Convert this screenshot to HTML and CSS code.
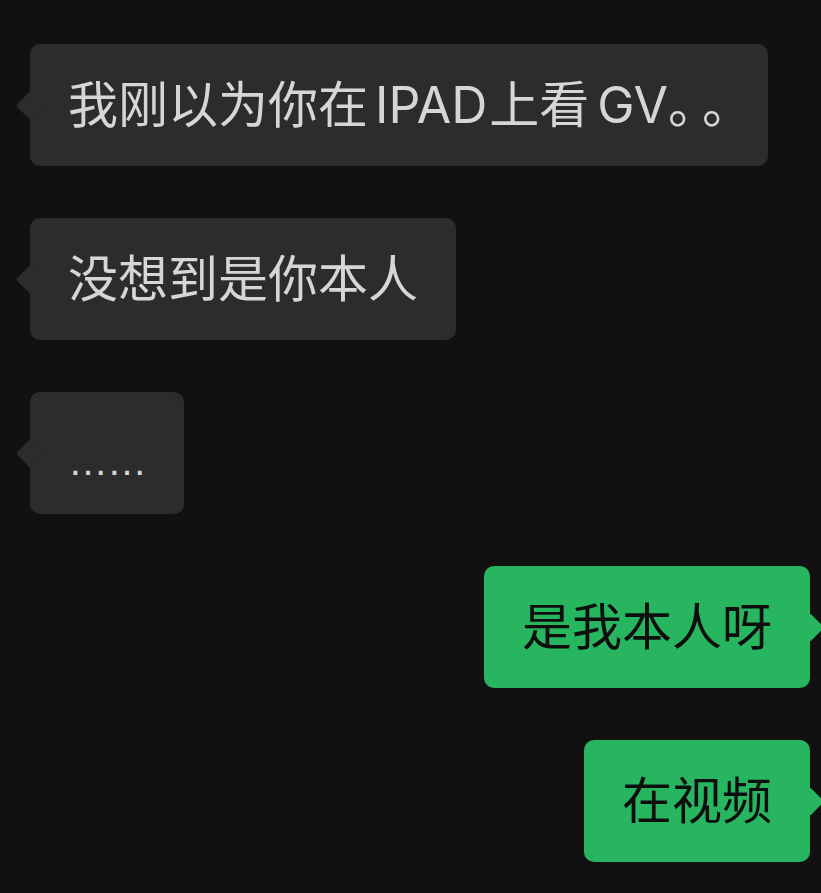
FILE: index.html
```html
<!DOCTYPE html>
<html lang="zh-CN">
<head>
  <meta charset="UTF-8" />
  <meta name="viewport" content="width=device-width, initial-scale=1.0"/>
  <title>聊天记录</title>
  <link rel="stylesheet" href="styles.css">
</head>
<body>
  <div class="chat">
    <div class="row left"><div class="bubble">我刚以为你在<span class="latin ipad">IPAD</span>上看<span class="latin gv">GV</span><span class="stop">。。</span></div></div>
    <div class="row left"><div class="bubble">没想到是你本人</div></div>
    <div class="row left"><div class="bubble dots">……</div></div>
    <div class="row right"><div class="bubble">是我本人呀</div></div>
    <div class="row right"><div class="bubble">在视频</div></div>
  </div>
</body>
</html>
```

FILE: styles.css
```css
body { margin: 0; background: #111111; font-family: "Inter", "Noto Sans CJK SC", sans-serif; overflow: hidden; }
.chat { display: flex; flex-direction: column; gap: 52px; padding: 44px 11px 0 30px; }
.row { display: flex; }
.row.left { justify-content: flex-start; }
.row.right { justify-content: flex-end; }
.bubble { position: relative; padding: 26px 38px; height: 70px; font-size: 50px; line-height: 70px; border-radius: 10px; white-space: nowrap; }
.bubble::before { content: ""; position: absolute; top: 50%; width: 21px; height: 21px; border-radius: 3px; margin-top: -10px; transform: rotate(45deg); }
.left .bubble { background: #2c2c2c; color: #d6d6d6; }
.left .bubble::before { left: -10px; background: #2c2c2c; }
.right .bubble { background: #28b560; color: #0e0e0e; }
.right .bubble::before { right: -10px; background: #28b560; }
.ipad { margin: 0 2px 0 7px; }
.gv { margin: 0 0 0 8px; }
.stop { font-family: "Noto Sans CJK SC", sans-serif; line-height: 1; text-spacing-trim: space-all; font-feature-settings: "chws" 0, "halt" 0; letter-spacing: -16px; margin-right: -6px; }
.dots { font-family: "Liberation Sans", sans-serif; font-size: 40px; letter-spacing: -1px; padding-top: 34px; padding-bottom: 18px; height: 70px; }
```
